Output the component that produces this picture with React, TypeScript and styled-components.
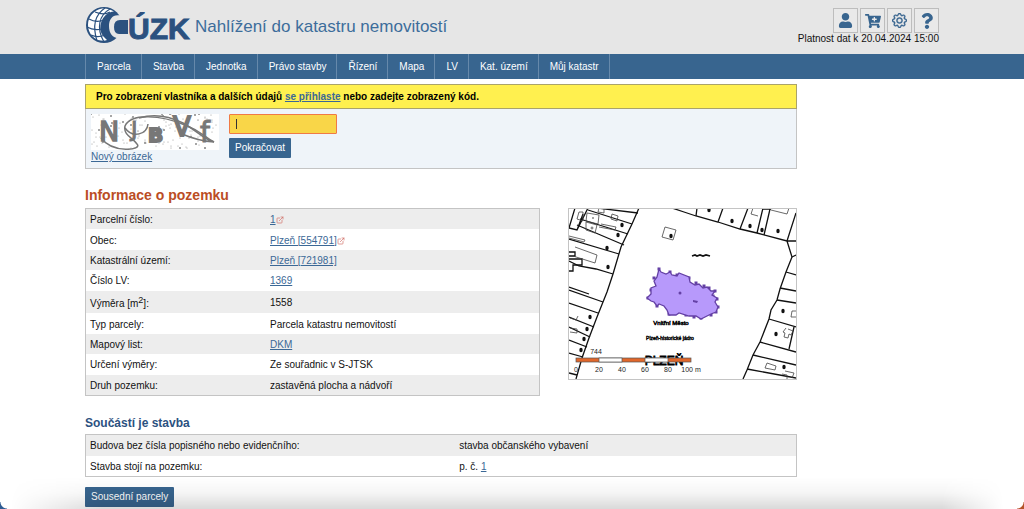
import React from "react";
import styled, { createGlobalStyle } from "styled-components";
import { FaUser, FaCartPlus, FaQuestion } from "react-icons/fa";
import { BsGear } from "react-icons/bs";
import { FiExternalLink } from "react-icons/fi";

const blue = "#38658f";
const navy = "#2b517f";
const line = "#c4c4c4";

const GlobalStyle = createGlobalStyle`
  * { box-sizing: border-box; }
  body {
    margin: 0;
    background: #fff;
    color: #111;
    font: 10px/12px "Liberation Sans", Arial, sans-serif;
  }
  a { color: #3b6896; }
`;

const Container = styled.div`
  width: 100%;
  max-width: 854px;
  margin: 0 auto;
`;

const Header = styled.header`
  background: #e6e6e6;
`;

const HeaderRow = styled(Container)`
  display: flex;
  justify-content: space-between;
  height: 54px;
`;

const Brand = styled.div`
  display: flex;
  align-items: center;
  gap: 4px;
  padding-bottom: 2px;
`;

const SiteTitle = styled.h1`
  margin: 0;
  padding-top: 2px;
  color: #3d6d9b;
  font-size: 17px;
  line-height: 20px;
  font-weight: 400;
`;

const Tools = styled.div`
  display: flex;
  flex-direction: column;
  align-items: flex-end;
  padding-top: 8px;
`;

const ToolButtons = styled.div`
  display: flex;
  gap: 2px;
`;

const ToolButton = styled.button`
  display: flex;
  align-items: center;
  justify-content: center;
  width: 25px;
  height: 25px;
  padding: 0;
  border: 1px solid #bdbdbd;
  background: #e9e9e9;
  color: ${blue};
  font-size: 16px;
`;

const Nav = styled.nav`
  background: ${blue};
`;

const NavList = styled(Container).attrs({ as: "ul" })`
  display: flex;
  padding: 0;
  list-style: none;
  border-left: 1px solid #6689ab;
`;

const NavLink = styled.a`
  display: block;
  padding: 7px 10px 6px 11px;
  border-right: 1px solid #6689ab;
  && { color: #fff; }
  text-decoration: none;
`;

const Main = styled.main`
  max-width: 712px;
  padding: 5px 0 3px;
`;

const Notice = styled.p`
  margin: 0;
  padding: 6px 10px 5px;
  border: 1px solid #aaa36a;
  background: #fff04f;
  color: #000;
  font-weight: 700;
`;

const CaptchaForm = styled.form`
  display: flex;
  gap: 10px;
  padding: 5px;
  border: 1px solid ${line};
  border-top: 0;
  background: #eff4f9;
`;

const CaptchaSide = styled.div`
  display: flex;
  flex-direction: column;
  align-items: flex-start;
  gap: 1px;
`;

const CodeFields = styled.div`
  display: flex;
  flex-direction: column;
  align-items: flex-start;
  gap: 4px;
`;

const CodeInput = styled.input`
  width: 108px;
  height: 20px;
  padding: 2px 6px;
  border: 1px solid #f07a45;
  border-radius: 1px;
  outline: none;
  background: linear-gradient(#333, #333) 6px 4px / 1px 10px no-repeat #f9d648;
  font: inherit;
`;

const Button = styled.button`
  padding: 4px 6px;
  border: 0;
  border-radius: 1px;
  background: ${blue};
  color: #fff;
  font: inherit;
`;

const Heading = styled.h2`
  margin: 17px 0 4px;
  color: #bb4d24;
  font-size: 14px;
  line-height: 18px;
`;

const SubHeading = styled.h3`
  margin: 19px 0 3px;
  color: ${navy};
  font-size: 12px;
  line-height: 16px;
`;

const InfoRow = styled.div`
  display: flex;
  align-items: flex-start;
  gap: 28px;
`;

const DataTable = styled.table<{ $labelWidth: string; $height: number }>`
  flex: 1;
  width: 100%;
  height: ${(p) => p.$height}px;
  border: 1px solid ${line};
  border-spacing: 0;
  table-layout: fixed;
  th { width: ${(p) => p.$labelWidth}; }
`;

const Row = styled.tr`
  &:nth-child(odd) { background: #ededed; }
  th, td {
    padding: 5px 4px 3px;
    font-weight: 400;
    text-align: left;
    vertical-align: middle;
  }
  sup {
    font-size: 9px;
    line-height: 9px;
  }
  svg {
    color: #cf6a62;
    vertical-align: -1px;
  }
`;

const MapLink = styled.a`
  display: block;
  flex: none;
  border: 1px solid ${line};
  line-height: 0;
`;

const Actions = styled.div`
  padding-top: 10px;
`;

const WindowShade = styled.div`
  position: fixed;
  inset: auto 0 0;
  height: 32px;
  pointer-events: none;
  background: linear-gradient(transparent, rgba(0, 0, 0, 0.04) 50%, rgba(0, 0, 0, 0.15));
  mask-image: linear-gradient(90deg, transparent 1%, #000 10%, #000 92%, transparent 98%);
`;

const WindowCorners = styled.div`
  position: fixed;
  inset: auto 0 0;
  height: 7px;
  pointer-events: none;
  background:
    radial-gradient(circle at 100% 0, transparent 6px, #2f5c93 7px) 0 0 / 7px 7px no-repeat,
    radial-gradient(circle at 0 0, transparent 6px, #b4532a 7px) 100% 0 / 7px 7px no-repeat;
`;

const Logo = () => (
  <svg width="106" height="42" viewBox="0 0 106 42" role="img" aria-label="ČÚZK">
    <circle cx="19" cy="20" r="18" fill={navy} />
    <path d="M17 3.5C9 5 3 12 3 19.500C3 27 7 32.500 13 35C17 36 20 36 22 35C16 30 14 25 16 18C18 11 23 7 29 6.500C25 4 21 3 17 3.500Z" fill="#fff" />
    <g fill="none" stroke={navy} strokeWidth="1.200">
      <path d="M20 3C11 9 7 20 12 36" />
      <path d="M25 4C14 10 11 23 19 37" />
      <path d="M10 7C15 9 20 10 25 7" />
      <path d="M4 14C9 17 14 17 19 15" />
      <path d="M2 22C7 25 12 25 17 24" />
      <path d="M6 30C10 32 15 32 20 30" />
    </g>
    <path d="M40 12C29 7 24 13 24 21C24 29 28 34 36 33L39 37L44 28Z" fill="#e6e6e6" />
    <path d="M35 15H43V29H34Q29 29 29 22Q29 15 35 15Z" fill={navy} />
    <text x="43" y="34" fill={navy} stroke={navy} strokeWidth="1" fontFamily="Liberation Sans, Arial, sans-serif" fontWeight="700" fontSize="30">ÚZK</text>
  </svg>
);

const specks = Array.from({ length: 130 }, (_, i) => ({
  x: (i * 47 + ((i * i * 7) % 31)) % 127,
  y: (i * 23 + ((i * i * 5) % 17)) % 35,
  r: i % 6 === 0 ? 1 : 0.5,
}));

const Captcha = () => (
  <svg width="128" height="36" viewBox="0 0 128 36" role="img" aria-label="Kontrolní kód">
    <rect width="128" height="36" fill="#fff" />
    <g fill="#888">
      {specks.map((s, i) => <circle key={i} cx={s.x} cy={s.y} r={s.r} />)}
    </g>
    <g fill="#777" stroke="#777" fontFamily="DejaVu Sans, sans-serif">
      <text x="8" y="27" fontSize="27" strokeWidth="1.500">N</text>
      <text x="40" y="23" fontSize="22">J</text>
      <text x="57" y="28" fontSize="20" fontWeight="700" strokeWidth="2">B</text>
      <text x="82" y="22" fontSize="26" strokeWidth="2">V</text>
      <text x="109" y="28" fontSize="28">f</text>
    </g>
    <g fill="none" stroke="#777" strokeWidth="1.500">
      <path d="M10 24C22 40 52 36 46 30C42 24 32 21 34 12C40 -1 70 1 94 11C112 18 113 23 123 28" />
      <path d="M48 4C64 -1 78 2 92 9C108 18 112 25 123 28C108 27 98 23 91 20" />
      <path d="M34 14C42 25 56 20 57 10" />
    </g>
  </svg>
);

const mapDots = [
  [54, 17], [50, 27], [39, 40], [40, 59], [103, 28], [22, 109], [19, 121], [16, 131], [13, 142],
  [141, 2], [164, 13], [182, 18], [194, 22], [210, 23], [215, 103], [208, 126], [216, 159],
];

const buttresses = [
  [91, 61], [86, 70], [83, 82], [102, 64], [109, 67], [121, 70], [128, 75], [136, 78], [141, 80], [147, 83],
  [145, 88], [149, 91], [150, 99], [148, 104], [143, 107], [133, 110], [126, 109], [118, 107],
  [101, 106], [89, 98], [80, 90],
];

const ParcelMap = () => (
  <svg width="227" height="170" viewBox="1 1 227 170" role="img" aria-label="Mapa okolí parcely">
    <rect width="229" height="172" fill="#fff" />
    <g fill="none" stroke="#111" strokeWidth="1.300">
      <path d="M71 0L64 16L53 39L45 66L39 84L35 94L29 109L21 130L14 150L8 171" />
      <path d="M29 0L70 5M20 2L64 16M12 11L60 26M9 17L56 37M1 31L51 46M1 53L11 58L28 61L45 66M1 79L21 86" />
      <path d="M1 82L35 94M1 95L30 105M1 109L26 119M1 119L22 129M1 132L19 139M1 145L15 149M1 165L9 167" />
      <path d="M7 0L1 20L9 22L20 0M15 6L9 22M1 44H7V48H1M1 51H14V57H5V63H1" />
      <path d="M104 0L116 4L128 8L150 14L172 21L189 25L219 33H228M219 33L224 49L218 64L212 81L209 92L203 102L201 111L192 134L185 147L179 162L175 171" />
      <path d="M129 0L128 8M155 0L150 14M180 0L172 21M195 0L189 25M202 1L196 27M195 1H203M228 5L219 33M224 49L228 47M218 64L228 67M212 80L228 83" />
      <path d="M209 92L228 95M201 111L228 119M192 134L228 144M226 119L221 141M185 147L228 157M179 161L228 170" />
    </g>
    <g fill="none" stroke="#444" strokeWidth="0.800">
      <path d="M19 5L31 7L30 16L18 13ZM18 14L29 17L27 25L18 22ZM11 4H15V13L9 11ZM44 6L50 8L49 13L43 11ZM31 0H36V5L30 4Z" />
      <path d="M33 16L48 19L47 22L31 19M1 28L17 32L16 34L1 30M7 39L29 47L27 55L5 48" />
      <path d="M97 19L108 22L105 32L94 29ZM185 0L183 6L190 8M203 2L219 6L221 0M228 103H224L223 109H228" />
      <path d="M220 121L225 123L223 127L221 126L220 130L216 129L217 125L215 124L218 120M199 155L208 158L207 162L197 160ZM217 163L226 165L224 170M2 110L8 112L10 108M2 120L9 121V125L2 124M214 166L219 167V171" />
      <circle cx="25" cy="10" r="0.500" />
      <circle cx="24" cy="20" r="1" />
    </g>
    <g fill="#111">
      {mapDots.map(([x, y]) => <ellipse key={`${x}-${y}`} cx={x} cy={y} rx="1.700" ry="2.200" />)}
    </g>
    <path d="M124 48L127 47L129 48L132 47L135 48L138 47L142 48" fill="none" stroke="#111" strokeWidth="1.800" />
    <g fill="#6440a5">
      {buttresses.map(([x, y]) => <rect key={`${x}-${y}`} x={x - 1.5} y={y - 1.5} width="3" height="3" />)}
    </g>
    <path
      d="M91 61L93 64L98 66L102 64L104 67L109 68L111 65L121 69L122 74L127 77L131 76L135 80L139 79L143 83L147 83L144 87L149 90L147 94L150 99L148 104L143 106L139 108L133 111L128 108L121 108L111 105L108 107L101 107L99 102L96 98L91 96L89 98L86 94L83 93L79 90L83 86V80L88 78L86 73L89 69Z"
      fill="#b799fb" stroke="#6440a5" strokeWidth="1.300"
    />
    <g fill="#6440a5">
      <circle cx="112" cy="85" r="1.500" />
      <path d="M125 92L130 93L129 95L125 94Z" />
    </g>
    <g fontFamily="Liberation Sans, Arial, sans-serif" textAnchor="middle" fill="#000" stroke="#000">
      <text x="103" y="117" fontSize="6" strokeWidth="0.500">Vnitřní Město</text>
      <text x="102" y="132" fontSize="5" strokeWidth="0.400">Plzeň-historické jádro</text>
      <text x="96" y="157" fontSize="12" strokeWidth="0.800">PLZEŇ</text>
    </g>
    <g stroke="#555" strokeWidth="0.700">
      <rect x="8" y="150" width="115" height="4" fill="#e1672b" />
      <rect x="31" y="150" width="23" height="4" fill="#fff" />
      <rect x="77" y="150" width="23" height="4" fill="#fff" />
    </g>
    <g fontFamily="Liberation Sans, Arial, sans-serif" fontSize="7" textAnchor="middle" fill="#222">
      <text x="28" y="146">744</text>
      <text x="8" y="164">0</text>
      <text x="31" y="164">20</text>
      <text x="54" y="164">40</text>
      <text x="77" y="164">60</text>
      <text x="100" y="164">80</text>
      <text x="123" y="164">100 m</text>
    </g>
  </svg>
);

const navItems = ["Parcela", "Stavba", "Jednotka", "Právo stavby", "Řízení", "Mapa", "LV", "Kat. území", "Můj katastr"];

const parcelRows: [React.ReactNode, React.ReactNode][] = [
  ["Parcelní číslo:", <><a href="#parcela">1</a><FiExternalLink size={8} /></>],
  ["Obec:", <><a href="#obec">Plzeň [554791]</a><FiExternalLink size={8} /></>],
  ["Katastrální území:", <a href="#uzemi">Plzeň [721981]</a>],
  ["Číslo LV:", <a href="#lv">1369</a>],
  [<>Výměra [m<sup>2</sup>]:</>, "1558"],
  ["Typ parcely:", "Parcela katastru nemovitostí"],
  ["Mapový list:", <a href="#dkm">DKM</a>],
  ["Určení výměry:", "Ze souřadnic v S-JTSK"],
  ["Druh pozemku:", "zastavěná plocha a nádvoří"],
];

const buildingRows: [React.ReactNode, React.ReactNode][] = [
  ["Budova bez čísla popisného nebo evidenčního:", "stavba občanského vybavení"],
  ["Stavba stojí na pozemku:", <>p. č. <a href="#parcela">1</a></>],
];

const Rows = ({ rows }: { rows: [React.ReactNode, React.ReactNode][] }) => (
  <tbody>
    {rows.map(([label, value], i) => (
      <Row key={i}>
        <th scope="row">{label}</th>
        <td>{value}</td>
      </Row>
    ))}
  </tbody>
);

export default function App() {
  return (
    <>
      <GlobalStyle />
      <Header>
        <HeaderRow>
          <Brand>
            <Logo />
            <SiteTitle>Nahlížení do katastru nemovitostí</SiteTitle>
          </Brand>
          <Tools>
            <ToolButtons>
              <ToolButton aria-label="Přihlášení"><FaUser size={15} /></ToolButton>
              <ToolButton aria-label="Košík"><FaCartPlus /></ToolButton>
              <ToolButton aria-label="Nastavení"><BsGear size={15} stroke={blue} strokeWidth={0.5} /></ToolButton>
              <ToolButton aria-label="Nápověda"><FaQuestion /></ToolButton>
            </ToolButtons>
            <span>Platnost dat k 20.04.2024 15:00</span>
          </Tools>
        </HeaderRow>
      </Header>
      <Nav>
        <NavList>
          {navItems.map((item) => (
            <li key={item}><NavLink href="#menu">{item}</NavLink></li>
          ))}
        </NavList>
      </Nav>
      <Container>
        <Main>
          <Notice>
            Pro zobrazení vlastníka a dalších údajů <a href="#prihlaseni">se přihlaste</a> nebo zadejte zobrazený kód.
          </Notice>
          <CaptchaForm onSubmit={(e) => e.preventDefault()}>
            <CaptchaSide>
              <Captcha />
              <a href="#obrazek">Nový obrázek</a>
            </CaptchaSide>
            <CodeFields>
              <CodeInput type="text" aria-label="Zobrazený kód" />
              <Button type="submit">Pokračovat</Button>
            </CodeFields>
          </CaptchaForm>
          <Heading>Informace o pozemku</Heading>
          <InfoRow>
            <DataTable $labelWidth="180px" $height={188}>
              <Rows rows={parcelRows} />
            </DataTable>
            <MapLink href="#mapa"><ParcelMap /></MapLink>
          </InfoRow>
          <SubHeading>Součástí je stavba</SubHeading>
          <DataTable $labelWidth="52%" $height={43}>
            <Rows rows={buildingRows} />
          </DataTable>
          <Actions>
            <Button type="button">Sousední parcely</Button>
          </Actions>
        </Main>
      </Container>
      <WindowShade />
      <WindowCorners />
    </>
  );
}
